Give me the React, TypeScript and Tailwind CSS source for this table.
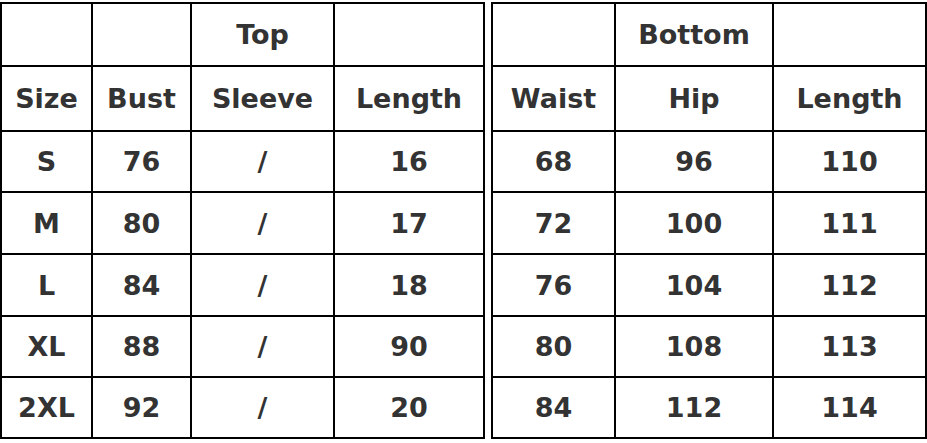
import type { ReactNode } from 'react';

const FONT = "font-['DejaVu_Sans',Verdana,sans-serif]";

const rowHeights = 'grid-rows-[61px_63px_59px_60px_60px_59px_59px]';

const topRows: string[][] = [
  ['', '', 'Top', ''],
  ['Size', 'Bust', 'Sleeve', 'Length'],
  ['S', '76', '/', '16'],
  ['M', '80', '/', '17'],
  ['L', '84', '/', '18'],
  ['XL', '88', '/', '90'],
  ['2XL', '92', '/', '20'],
];

const bottomRows: string[][] = [
  ['', 'Bottom', ''],
  ['Waist', 'Hip', 'Length'],
  ['68', '96', '110'],
  ['72', '100', '111'],
  ['76', '104', '112'],
  ['80', '108', '113'],
  ['84', '112', '114'],
];

function Cell({ children }: { children: ReactNode }) {
  return (
    <div className="bg-white flex items-center justify-center text-[27px] font-bold text-[#333333] leading-none">
      {children}
    </div>
  );
}

function SizeTable({ rows, cols }: { rows: string[][]; cols: string }) {
  return (
    <div className={`grid ${cols} ${rowHeights} gap-[2px] p-[2px] bg-black`}>
      {rows.flatMap((row, r) =>
        row.map((val, c) => <Cell key={`${r}-${c}`}>{val}</Cell>)
      )}
    </div>
  );
}

export default function App() {
  return (
    <div className={`w-[927px] h-[443px] bg-white overflow-hidden pt-[2px] ${FONT}`}>
      <div className="flex gap-[6px]">
        <SizeTable rows={topRows} cols="grid-cols-[89px_97px_141px_148px]" />
        <SizeTable rows={bottomRows} cols="grid-cols-[121px_156px_151px]" />
      </div>
    </div>
  );
}
